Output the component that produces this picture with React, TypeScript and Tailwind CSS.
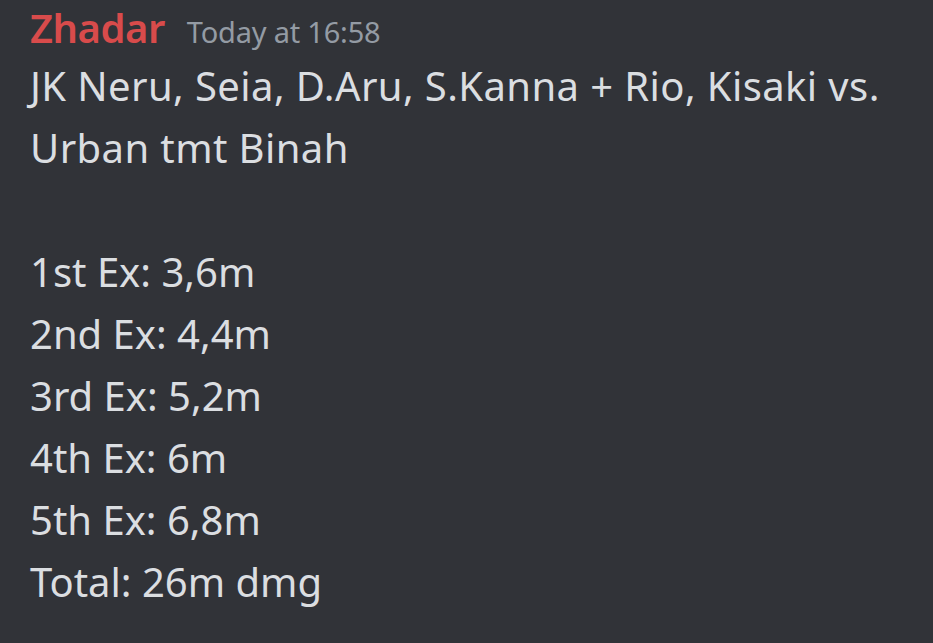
const lines = [
  "JK Neru, Seia, D.Aru, S.Kanna + Rio, Kisaki vs. Urban tmt Binah",
  "",
  "1st Ex: 3,6m",
  "2nd Ex: 4,4m",
  "3rd Ex: 5,2m",
  "4th Ex: 6m",
  "5th Ex: 6,8m",
  "Total: 26m dmg",
];

const App = () => {
  return (
    <div
      className="min-h-screen w-full bg-[#313338] pl-[30px] pr-[20px]"
      style={{ fontFamily: '"Noto Sans", "Open Sans", sans-serif' }}
    >
      <div className="flex items-baseline gap-[22px] h-[55px] leading-[55px]">
        <span className="text-[40px] font-semibold tracking-[-0.5px] text-[#d84b4b]">Zhadar</span>
        <span className="text-[29px] tracking-[-0.2px] text-[#949ba4]">Today at 16:58</span>
      </div>
      <div className="text-[40px] leading-[62px] text-[#dbdee1]">
        {lines.map((line, i) => (
          <div key={i} className={i === 0 ? "min-h-[62px] tracking-[0.4px]" : "min-h-[62px]"}>
            {line}
          </div>
        ))}
      </div>
    </div>
  );
};

export default App;
